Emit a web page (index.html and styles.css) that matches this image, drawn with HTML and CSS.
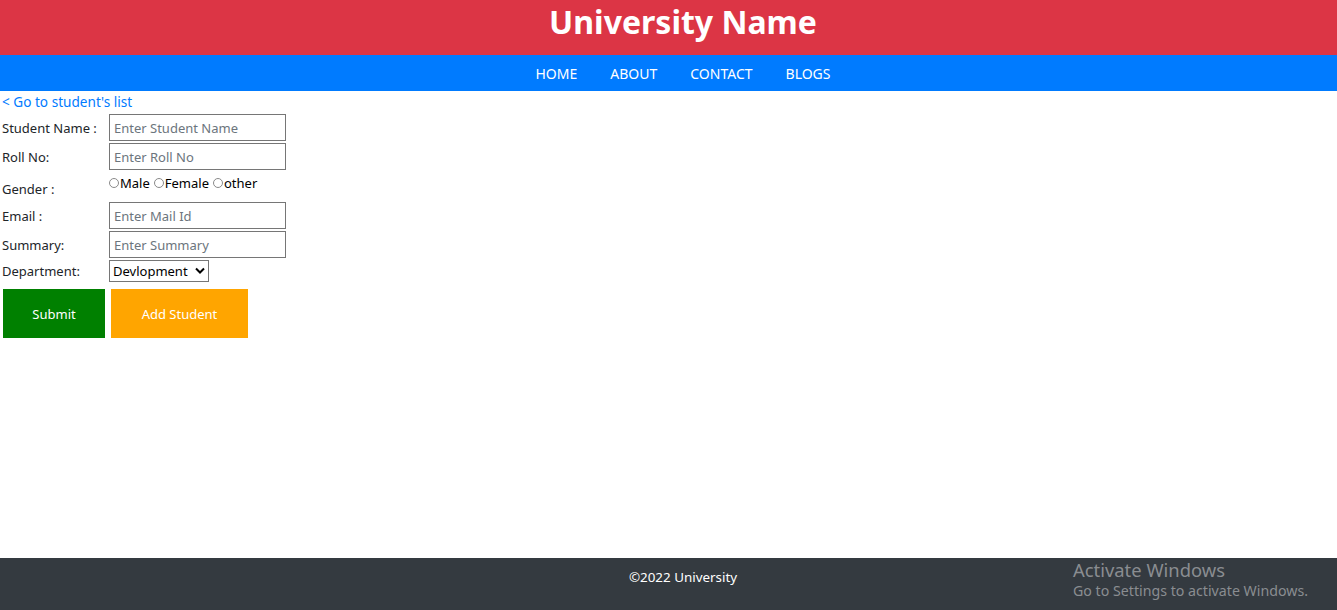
FILE: index.html
```html
<!DOCTYPE html>
<html lang="en">
<head>
<meta charset="utf-8">
<title>University</title>
<link rel="stylesheet" href="styles.css">
</head>
<body>
<div class="page">
  <header class="brand">
    <h1 class="brand-title">University Name</h1>
  </header>
  <nav class="nav">
    <a class="nav-link" href="#">HOME</a>
    <a class="nav-link" href="#">ABOUT</a>
    <a class="nav-link" href="#">CONTACT</a>
    <a class="nav-link" href="#">BLOGS</a>
  </nav>
  <main class="main">
    <a class="back-link" href="#">&lt; Go to student's list</a>
    <form class="form">
      <label class="lbl">Student Name :</label>
      <input class="field" type="text" placeholder="Enter Student Name">
      <label class="lbl">Roll No:</label>
      <input class="field" type="text" placeholder="Enter Roll No">
      <label class="lbl lbl-gender">Gender :</label>
      <div class="radios">
        <label class="radio"><span class="dot"></span>Male</label>
        <label class="radio"><span class="dot"></span>Female</label>
        <label class="radio"><span class="dot"></span>other</label>
      </div>
      <label class="lbl">Email :</label>
      <input class="field" type="text" placeholder="Enter Mail Id">
      <label class="lbl">Summary:</label>
      <input class="field" type="text" placeholder="Enter Summary">
      <label class="lbl">Department:</label>
      <div class="select-wrap">
        <div class="select">Devlopment
          <svg class="chev" viewBox="0 0 10 8" width="10" height="8"><path d="M1 1.5 L5 5.5 L9 1.5" fill="none" stroke="#000" stroke-width="2"/></svg>
        </div>
      </div>
    </form>
    <div class="actions">
      <button class="btn btn-submit" type="button">Submit</button>
      <button class="btn btn-add" type="button">Add Student</button>
    </div>
  </main>
  <footer class="footer">
    <span class="copy">©2022 University</span>
  </footer>
</div>
<div class="watermark">
  <div class="wm-title">Activate Windows</div>
  <div class="wm-sub">Go to Settings to activate Windows.</div>
</div>
</body>
</html>
```

FILE: styles.css
```css
* { box-sizing: border-box; }
html, body { margin: 0; padding: 0; }
html { overflow: hidden; }
body {
  font-family: "Noto Sans", "Open Sans", sans-serif;
  font-size: 13px;
  color: #212529;
  background: #fff;
  position: relative;
  width: 1337px;
  height: 610px;
  overflow: hidden;
}
.page {
  width: 1366px;
  height: 610px;
  display: flex;
  flex-direction: column;
}
.brand {
  background: #dc3545;
  height: 55px;
  display: flex;
  align-items: center;
  justify-content: center;
}
.brand-title {
  margin: 0;
  color: #fff;
  font-size: 32px;
  font-weight: 700;
  line-height: 1;
  padding-bottom: 12px;
}
.nav {
  background: #007bff;
  height: 36px;
  display: flex;
  align-items: center;
  justify-content: center;
}
.nav-link {
  color: #fff;
  text-decoration: none;
  font-size: 14px;
  padding: 0 16.5px;
}
.main {
  flex: 1;
  padding: 1px 0 0 2px;
}
.back-link {
  display: block;
  color: #007bff;
  text-decoration: none;
  font-size: 13.6px;
  line-height: 20px;
}
.form {
  display: grid;
  grid-template-columns: 107px 177px;
  row-gap: 2px;
  align-items: center;
  margin-top: 2px;
}
.lbl {
  color: #212529;
  line-height: 18px;
}
.lbl-gender { padding-top: 6px; }
.field {
  width: 177px;
  height: 27px;
  border: 1px solid #767676;
  padding: 0 4px;
  font-family: inherit;
  font-size: 13px;
  color: #212529;
}
.field::placeholder { color: #6c757d; }
.radios {
  display: flex;
  align-items: center;
  height: 28px;
  padding-bottom: 6px;
  font-size: 13px;
  color: #000;
}
.radio { display: inline-flex; align-items: center; margin-right: 4px; }
.dot {
  width: 10px; height: 10px;
  border: 1px solid #8a8a8a;
  border-radius: 50%;
  margin-right: 1px;
}
.select-wrap { display: flex; }
.select {
  display: inline-flex;
  align-items: center;
  gap: 4px;
  height: 22px;
  width: 100px;
  border: 1px solid #767676;
  padding: 0 3px;
  font-size: 13px;
  color: #000;
}
.chev { margin-left: auto; }
.actions {
  display: flex;
  gap: 6px;
  margin-top: 7px;
  padding-left: 1px;
}
.btn {
  border: 0;
  height: 49px;
  color: #fff;
  font-family: inherit;
  font-size: 13px;
}
.btn-submit { background: #008000; width: 102px; }
.btn-add { background: #ffa500; width: 137px; }
.footer {
  background: #343a40;
  height: 52px;
  display: flex;
  justify-content: center;
  padding-top: 10px;
}
.copy { color: #fff; font-size: 13.4px; line-height: 18px; }
.watermark {
  position: absolute;
  left: 1073px;
  top: 559px;
  color: #8a8d91;
}
.wm-title { font-size: 18.4px; line-height: 22px; }
.wm-sub { font-size: 14.2px; line-height: 20px; }
```
